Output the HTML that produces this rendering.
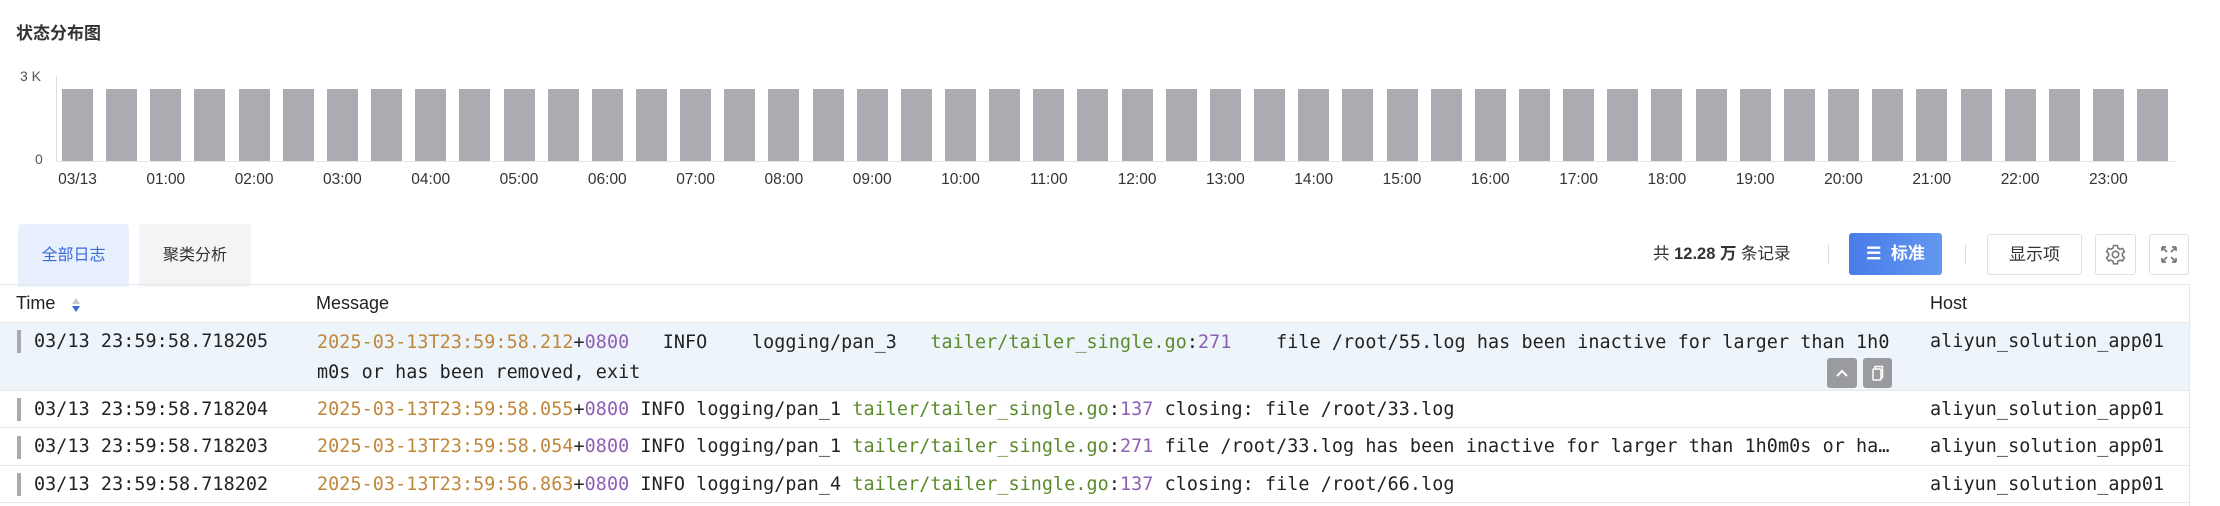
<!DOCTYPE html>
<html><head><meta charset="utf-8"><style>
*{margin:0;padding:0;box-sizing:border-box}
body{width:2220px;height:506px;background:#fff;position:relative;overflow:hidden;font-family:"Liberation Sans","Noto Sans CJK SC",sans-serif;color:#222}
.a{position:absolute}
.bar{position:absolute;top:89px;height:72px;width:31px;background:#abacb1}
.xl{position:absolute;top:170px;font-size:15.5px;color:#333;width:60px;text-align:center;line-height:20px}
.mono{font-family:"DejaVu Sans Mono","Liberation Mono",monospace;font-size:18.4px;letter-spacing:0.08px;white-space:pre;color:#222}
.o{color:#c0873a}.p{color:#8e5fb5}.g{color:#5a8a2a}
.row{position:absolute;left:0;width:2189px;border-bottom:1px solid #e5e7eb}
.mk{position:absolute;left:17px;width:4px;background:#a9a9ad}
.btn{position:absolute;border:1px solid #dcdfe4;border-radius:3px;background:#fff}
</style></head><body>
<div class="a" style="left:16px;top:19px;font-size:17px;font-weight:bold;color:#333">状态分布图</div>
<div class="a" style="left:20px;top:68px;font-size:14px;color:#555">3 K</div>
<div class="a" style="left:35px;top:151px;font-size:14px;color:#555">0</div>
<div class="a" style="left:56px;top:76px;width:1px;height:86px;background:#ddd"></div>
<div class="a" style="left:56px;top:161px;width:2120px;height:1px;background:#e6e6e6"></div>
<div id="bars"></div>
<script>
var h='';for(var i=0;i<48;i++){h+='<div class="bar" style="left:'+(62+i*44.15).toFixed(1)+'px"></div>';}
var labs=['03/13'];for(var j=1;j<24;j++)labs.push((j<10?'0':'')+j+':00');
for(var k=0;k<24;k++){var c=77.5+k*88.3;h+='<div class="xl" style="left:'+(c-30).toFixed(1)+'px">'+labs[k]+'</div>';}
document.getElementById('bars').innerHTML=h;
</script>
<div class="a" style="left:18px;top:224px;width:111px;height:63px;background:#e8effd;border-radius:4px 4px 0 0;color:#3a6ad8;font-size:16px;text-align:center;line-height:63px">全部日志</div>
<div class="a" style="left:139px;top:224px;width:112px;height:63px;background:#f3f4f6;border-radius:4px 4px 0 0;color:#333;font-size:16px;text-align:center;line-height:63px">聚类分析</div>
<div class="a" style="left:1653px;top:243px;font-size:16.5px;color:#333;line-height:22px">共 <b>12.28 万</b> 条记录</div>
<div class="a" style="left:1828px;top:244px;width:1px;height:20px;background:#ddd"></div>
<div class="a" style="left:1849px;top:233px;width:93px;height:42px;border-radius:3px;background:linear-gradient(90deg,#4a7be8,#6298f0);color:#fff;font-size:17px;font-weight:bold;line-height:42px;text-align:center">☰&nbsp; 标准</div>
<div class="a" style="left:1965px;top:244px;width:1px;height:20px;background:#ddd"></div>
<div class="btn" style="left:1987px;top:234px;width:95px;height:41px;font-size:17px;text-align:center;line-height:39px;color:#333">显示项</div>
<div class="btn" style="left:2095px;top:234px;width:41px;height:41px">
<svg width="41" height="41" viewBox="0 0 41 41" style="position:absolute;left:-1px;top:-1px"><g fill="none" stroke="#777" stroke-width="1.6"><path d="M18.6 11.5h3.8l.6 2.6 2 1.1 2.5-.8 1.9 3.3-2 1.8v2.3l2 1.8-1.9 3.3-2.5-.8-2 1.1-.6 2.6h-3.8l-.6-2.6-2-1.1-2.5.8-1.9-3.3 2-1.8v-2.3l-2-1.8 1.9-3.3 2.5.8 2-1.1z"/><circle cx="20.5" cy="20.5" r="3.2"/></g></svg></div>
<div class="btn" style="left:2149px;top:234px;width:40px;height:41px">
<svg width="40" height="41" viewBox="0 0 40 41" style="position:absolute;left:-1px;top:-1px"><g fill="none" stroke="#777" stroke-width="1.7"><path d="M13 13l5 5M13 13h4M13 13v4M27 13l-5 5M27 13h-4M27 13v4M13 28l5-5M13 28h4M13 28v-4M27 28l-5-5M27 28h-4M27 28v-4"/></g></svg></div>
<div class="a" style="left:0;top:284px;width:2189px;height:1px;background:#e5e7eb"></div>
<div class="a" style="left:2189px;top:284px;width:1px;height:222px;background:#e5e7eb"></div>
<div class="row" style="top:285px;height:38px"></div>
<div class="a" style="left:16px;top:293px;font-size:18px;color:#222">Time</div>
<svg class="a" style="left:70px;top:297px" width="12" height="16" viewBox="0 0 12 16"><path d="M6 1L10 7H2z" fill="#c8c8c8"/><path d="M6 15L10 9H2z" fill="#3a6ad8"/></svg>
<div class="a" style="left:316px;top:293px;font-size:18px;color:#222">Message</div>
<div class="a" style="left:1930px;top:293px;font-size:18px;color:#222">Host</div>
<div class="row" style="top:323px;height:68px;background:#edf5fb"></div>
<div class="mk" style="top:330px;height:23px"></div>
<div class="a mono" style="left:34px;top:331px;line-height:22px">03/13 23:59:58.718205</div>
<div class="a mono" style="left:317px;top:328px;line-height:30px"><span class="o">2025-03-13T23:59:58.212</span>+<span class="p">0800</span>   INFO    logging/pan_3   <span class="g">tailer/tailer_single.go</span>:<span class="p">271</span>    file /root/55.log has been inactive for larger than 1h0
m0s or has been removed, exit</div>
<div class="a mono" style="left:1930px;top:331px;line-height:22px">aliyun_solution_app01</div>
<div class="a" style="left:1827px;top:358px;width:30px;height:30px;background:#9a9b9e;border-radius:3px"><svg width="30" height="30"><path d="M10 18l5-5 5 5" fill="none" stroke="#fff" stroke-width="2"/></svg></div>
<div class="a" style="left:1863px;top:358px;width:29px;height:30px;background:#9a9b9e;border-radius:3px"><svg width="29" height="30"><g fill="none" stroke="#fff" stroke-width="1.5"><rect x="10" y="11" width="8" height="11" rx="1"/><path d="M12 11V8.5h7.5v11H18"/></g></svg></div>
<div class="row" style="top:391px;height:37px"></div>
<div class="mk" style="top:398px;height:23px"></div>
<div class="a mono" style="left:34px;top:399px;line-height:22px">03/13 23:59:58.718204</div>
<div class="a mono" style="left:317px;top:399px;line-height:22px"><span class="o">2025-03-13T23:59:58.055</span>+<span class="p">0800</span> INFO logging/pan_1 <span class="g">tailer/tailer_single.go</span>:<span class="p">137</span> closing: file /root/33.log</div>
<div class="a mono" style="left:1930px;top:399px;line-height:22px">aliyun_solution_app01</div>
<div class="row" style="top:428px;height:38px"></div>
<div class="mk" style="top:436px;height:23px"></div>
<div class="a mono" style="left:34px;top:436px;line-height:22px">03/13 23:59:58.718203</div>
<div class="a mono" style="left:317px;top:436px;line-height:22px;width:1578px;overflow:hidden;text-overflow:ellipsis"><span class="o">2025-03-13T23:59:58.054</span>+<span class="p">0800</span> INFO logging/pan_1 <span class="g">tailer/tailer_single.go</span>:<span class="p">271</span> file /root/33.log has been inactive for larger than 1h0m0s or has been removed, exit</div>
<div class="a mono" style="left:1930px;top:436px;line-height:22px">aliyun_solution_app01</div>
<div class="row" style="top:466px;height:37px"></div>
<div class="mk" style="top:473px;height:23px"></div>
<div class="a mono" style="left:34px;top:474px;line-height:22px">03/13 23:59:58.718202</div>
<div class="a mono" style="left:317px;top:474px;line-height:22px"><span class="o">2025-03-13T23:59:56.863</span>+<span class="p">0800</span> INFO logging/pan_4 <span class="g">tailer/tailer_single.go</span>:<span class="p">137</span> closing: file /root/66.log</div>
<div class="a mono" style="left:1930px;top:474px;line-height:22px">aliyun_solution_app01</div>
</body></html>
